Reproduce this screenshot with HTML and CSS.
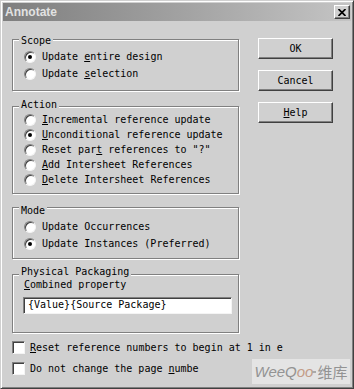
FILE: index.html
```html
<!DOCTYPE html>
<html>
  <head>
    <title>Annotate</title>
    <meta charset="utf-8" />
    <link rel="stylesheet" href="styles.css">
  </head>
  <body>
    <div class="dialog">
      <div class="titlebar">
        <span class="title">Annotate</span>
        <span class="close">
          <svg width="8" height="7" viewBox="0 0 8 7">
            <path d="M0.5 0 L7.5 7 M7.5 0 L0.5 7" stroke="#000" stroke-width="1.7" fill="none" />
          </svg>
        </span>
      </div>

      <div class="content">
        <div class="left">
          <div class="group scope">
            <div class="legend">Scope</div>
            <div class="opt tall"><span class="radio on"></span><span>Update <u>e</u>ntire design</span></div>
            <div class="opt tall"><span class="radio"></span><span>Update <u>s</u>election</span></div>
          </div>

          <div class="group action">
            <div class="legend">Action</div>
            <div class="opt"><span class="radio"></span><span><u>I</u>ncremental reference update</span></div>
            <div class="opt"><span class="radio on"></span><span><u>U</u>nconditional reference update</span></div>
            <div class="opt"><span class="radio"></span><span>Reset par<u>t</u> references to "?"</span></div>
            <div class="opt"><span class="radio"></span><span><u>A</u>dd Intersheet References</span></div>
            <div class="opt"><span class="radio"></span><span><u>D</u>elete Intersheet References</span></div>
          </div>

          <div class="group mode">
            <div class="legend">Mode</div>
            <div class="opt tall"><span class="radio"></span><span>Update Occurrences</span></div>
            <div class="opt tall"><span class="radio on"></span><span>Update Instances (Preferred)</span></div>
          </div>

          <div class="group packaging">
            <div class="legend">Physical Packaging</div>
            <div class="field-label"><u>C</u>ombined property</div>
            <div class="field">{Value}{Source Package}</div>
          </div>

          <div class="check"><span class="box"></span><span><u>R</u>eset reference numbers to begin at 1 in e</span></div>
          <div class="check"><span class="box"></span><span>Do not change the page <u>n</u>umbe</span></div>
        </div>

        <div class="buttons">
          <div class="btn">OK</div>
          <div class="btn">Cancel</div>
          <div class="btn"><u>H</u>elp</div>
        </div>
      </div>

      <div class="watermark"><i>WeeQ<span class="oo">oo</span></i><span class="dash"></span>维库</div>
    </div>
  </body>
</html>
```

FILE: styles.css
```css
body{
  margin: 0;
  background: #fff;
  font-family: "DejaVu Sans Mono", monospace;
  font-size: 10px;
  color: #000;
}

.dialog{
  position: relative;
  width: 354px;
  height: 389px;
  box-sizing: border-box;
  padding: 2px;
  background: #d0d0d0;
  border: 1px solid;
  border-color: #d0d0d0 #404040 #404040 #d0d0d0;
  box-shadow: inset 1px 1px 0 #fff, inset -1px -1px 0 #808080;
}

.titlebar{
  height: 18px;
  display: flex;
  align-items: center;
  justify-content: space-between;
  padding: 0 1px 0 2px;
  background: linear-gradient(to right, #7e7e7e, #c4c4c4);
}

.title{
  font-family: "Liberation Sans", Arial, sans-serif;
  font-weight: bold;
  font-size: 12px;
  color: #e2e2e2;
}

.close{
  width: 16px;
  height: 14px;
  box-sizing: border-box;
  display: flex;
  align-items: center;
  justify-content: center;
  background: #d0d0d0;
  border: 1px solid;
  border-color: #fff #404040 #404040 #fff;
  box-shadow: inset -1px -1px 0 #808080;
}

.content{
  display: flex;
  padding: 17px 0 0 9px;
}

.left{
  width: 227px;
  flex-shrink: 0;
  padding-top: 1px;
}

.group{
  border: 1px solid #808080;
  box-shadow: inset 1px 1px 0 #fff, 1px 1px 0 #fff;
}

.legend{
  width: fit-content;
  margin: -9px 0 1px 6px;
  padding: 0 2px;
  line-height: 12px;
  background: #d0d0d0;
}

.scope{
  padding: 4px 0 8px;
}

.action{
  margin-top: 15px;
  padding: 1px 0 6px;
}

.mode{
  margin-top: 13px;
  padding: 6px 0 6px;
}

.packaging{
  margin-top: 15px;
  padding: 0 0 18px;
}

.opt{
  display: flex;
  align-items: center;
  height: 15px;
  padding-left: 11px;
  white-space: pre;
}

.opt.tall{
  height: 17px;
}

.radio{
  position: relative;
  flex-shrink: 0;
  width: 12px;
  height: 12px;
  box-sizing: border-box;
  margin-right: 6px;
  border-radius: 50%;
  background: #fff;
  border: 1px solid;
  border-color: #808080 #f4f4f4 #f4f4f4 #808080;
  box-shadow: inset 1px 1px 0 #404040;
}

.radio.on::after{
  content: "";
  position: absolute;
  left: 3px;
  top: 3px;
  width: 4px;
  height: 4px;
  border-radius: 50%;
  background: #000;
}

.field-label{
  padding-left: 11px;
  line-height: 12px;
}

.field{
  margin: 6px 0 0 10px;
  width: 209px;
  height: 17px;
  box-sizing: border-box;
  padding-left: 4px;
  line-height: 14px;
  background: #fff;
  border: 1px solid;
  border-color: #808080 #f4f4f4 #f4f4f4 #808080;
  box-shadow: inset 1px 1px 0 #404040;
  white-space: pre;
}

.check{
  display: flex;
  align-items: center;
  height: 13px;
  margin-top: 8px;
  white-space: pre;
}

.box{
  flex-shrink: 0;
  width: 13px;
  height: 13px;
  box-sizing: border-box;
  margin-right: 5px;
  background: #fff;
  border: 1px solid;
  border-color: #808080 #f4f4f4 #f4f4f4 #808080;
  box-shadow: inset 1px 1px 0 #404040;
}

.buttons{
  display: flex;
  flex-direction: column;
  gap: 11px;
  margin-left: 19px;
}

.btn{
  width: 75px;
  height: 21px;
  box-sizing: border-box;
  display: flex;
  align-items: center;
  justify-content: center;
  background: #d0d0d0;
  border: 1px solid;
  border-color: #fff #404040 #404040 #fff;
  box-shadow: inset -1px -1px 0 #808080;
}

.watermark{
  position: absolute;
  left: 251px;
  top: 358px;
  width: 98px;
  height: 25px;
  display: flex;
  align-items: center;
  justify-content: center;
  white-space: nowrap;
  background: rgba(232, 232, 232, 0.8);
  color: #939393;
  font-family: "Liberation Sans", "Noto Sans CJK SC", sans-serif;
  font-size: 15px;
}

.oo{
  color: #c39c88;
}

.dash{
  width: 4px;
  height: 2px;
  margin: 0 1px 0 -1px;
  background: #a9a9a9;
}
```
